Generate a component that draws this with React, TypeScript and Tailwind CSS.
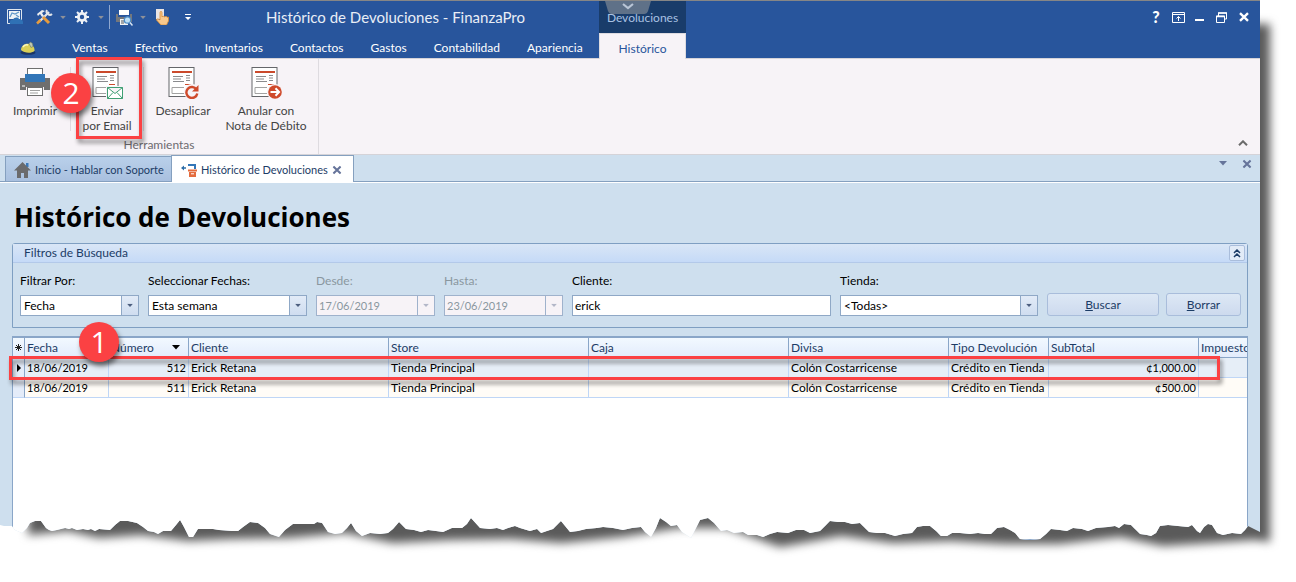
import type { ReactNode } from "react";

type Point = [number, number];

type ReturnRow = {
  date: string;
  number: number;
  client: string;
  store: string;
  currency: string;
  kind: string;
  subtotal: string;
};

const rows: ReturnRow[] = [
  {
    date: "18/06/2019",
    number: 512,
    client: "Erick Retana",
    store: "Tienda Principal",
    currency: "Colón Costarricense",
    kind: "Crédito en Tienda",
    subtotal: "¢1,000.00",
  },
  {
    date: "18/06/2019",
    number: 511,
    client: "Erick Retana",
    store: "Tienda Principal",
    currency: "Colón Costarricense",
    kind: "Crédito en Tienda",
    subtotal: "¢500.00",
  },
];

const menu = [
  "Ventas",
  "Efectivo",
  "Inventarios",
  "Contactos",
  "Gastos",
  "Contabilidad",
  "Apariencia",
];

// Torn paper profile: x over a 1260 wide sheet, y as distance from its bottom.
const tear: Point[] = [
  [0, 15], [4, 14], [12, 14], [15, 10], [22, 7], [27, 12], [30, 17], [35, 19],
  [41, 19], [46, 12], [49, 10], [52, 9], [57, 10], [61, 11], [65, 12], [69, 11],
  [72, 12], [77, 10], [83, 11], [88, 10], [91, 11], [95, 9], [99, 11], [110, 10],
  [115, 15], [120, 19], [128, 19], [137, 17], [143, 13], [148, 9], [154, 8],
  [158, 6], [163, 9], [171, 9], [176, 15], [180, 20], [184, 13], [189, 3],
  [193, 3], [198, 11], [206, 11], [213, 11], [219, 10], [232, 9], [238, 9],
  [243, 13], [250, 18], [258, 17], [265, 12], [270, 6], [279, 3], [285, 10],
  [293, 16], [302, 16], [314, 16], [317, 18], [322, 17], [328, 8], [335, 6],
  [342, 7], [347, 12], [351, 17], [356, 9], [362, 4], [370, 7], [380, 6],
  [388, 7], [393, 11], [399, 18], [406, 11], [414, 10], [421, 8], [428, 10],
  [436, 9], [443, 8], [452, 12], [462, 12], [467, 16], [471, 22], [480, 12],
  [490, 11], [497, 12], [503, 10], [508, 12], [515, 14], [520, 12], [530, 9],
  [537, 11], [541, 7], [547, 9], [553, 11], [561, 19], [570, 8], [578, 9],
  [586, 11], [597, 12], [603, 13], [613, 12], [623, 10], [632, 12], [641, 13],
  [645, 8], [651, 3], [656, 12], [660, 22], [666, 18], [671, 14], [677, 15],
  [682, 8], [691, 2], [695, 10], [700, 20], [708, 22], [714, 17], [721, 9],
  [727, 10], [734, 7], [743, 8], [748, 5], [757, 5], [763, 3], [770, 6],
  [777, 8], [788, 7], [796, 10], [804, 10], [810, 7], [820, 9], [825, 14],
  [830, 19], [838, 18], [845, 18], [852, 16], [860, 17], [865, 12], [869, 8],
  [877, 7], [885, 7], [895, 4], [903, 6], [912, 7], [917, 13], [923, 14],
  [930, 14], [936, 9], [941, 4], [947, 4], [952, 7], [960, 7], [970, 6],
  [978, 7], [985, 6], [991, 6], [997, 12], [1004, 13], [1010, 10], [1015, 7],
  [1020, 1], [1030, 0], [1040, 1], [1046, 6], [1051, 11], [1060, 10], [1067, 9],
  [1073, 12], [1082, 11], [1088, 9], [1096, 12], [1108, 13], [1115, 14],
  [1119, 12], [1124, 16], [1131, 15], [1136, 10], [1140, 6], [1147, 5],
  [1151, 4], [1156, 7], [1160, 14], [1168, 15], [1178, 14], [1188, 13],
  [1192, 15], [1197, 9], [1200, 7], [1204, 13], [1208, 16], [1212, 15],
  [1217, 7], [1223, 5], [1232, 7], [1241, 6], [1245, 10], [1248, 14], [1260, 8],
];

function tornEdge(points: Point[]) {
  const edge = [...points]
    .reverse()
    .map(([x, y]) => `${((x / 1260) * 100).toFixed(2)}% calc(100% - ${y}px)`);

  return `polygon(0 0, 100% 0, ${edge.join(", ")})`;
}

const sheetClip = tornEdge(tear);
const shadowClip = tornEdge(tear.filter((_, index) => index % 8 === 0 || index === tear.length - 1));

function CaretIcon({ className = "" }: { className?: string }) {
  return (
    <svg viewBox="0 0 8 5" className={`h-[5px] w-2 shrink-0 ${className}`} aria-hidden>
      <path d="M0 0h8L4 4.6z" fill="currentColor" />
    </svg>
  );
}

function CloseIcon({ className = "" }: { className?: string }) {
  return (
    <svg viewBox="0 0 10 10" className={`size-2.5 ${className}`} aria-hidden>
      <path d="M1 1.2l8 7.6M9 1.2L1 8.8" stroke="currentColor" strokeWidth="2.4" />
    </svg>
  );
}

function PrinterIcon() {
  return (
    <svg viewBox="0 0 32 32" className="size-8" aria-hidden>
      <path d="M1 11h5v4h20v-4h5v12h-6v-3H7v3H1z" fill="#6f6f6f" />
      <rect x="8.5" y="1.5" width="15" height="8" fill="#fff" stroke="#6f6f6f" />
      <rect x="6" y="7" width="20" height="8" fill="#3276b8" />
      <rect x="8.5" y="20.5" width="15" height="8" fill="#fff" stroke="#6f6f6f" />
      <path d="M11 23.5h10M11 26h8" stroke="#a0a0a0" />
      <path d="M3 19h3" stroke="#fff" />
    </svg>
  );
}

function DocumentIcon({ children }: { children: ReactNode }) {
  return (
    <svg viewBox="0 0 32 32" className="size-8" aria-hidden>
      <rect x="2" y=".5" width="25" height="29" fill="#fff" stroke="#65666a" />
      <path d="M5 5h20" stroke="#cb4a2c" strokeWidth="2" />
      <path d="M6 9.500h10M6 12h8M6 14.500h11M19 8.500h4M19 11h4M19 13.500h4" stroke="#8a8b8e" />
      <path d="M18 17.500h6" stroke="#cb4a2c" />
      <path d="M17 20.500H5v6h12" fill="none" stroke="#a2a2a2" />
      {children}
    </svg>
  );
}

function MailDocumentIcon() {
  return (
    <DocumentIcon>
      <rect x="15" y="19" width="17" height="13" fill="#f7f3f7" />
      <path
        d="M16.500 20.500h15v11h-15zM16.500 20.500l7.500 6 7.500-6M16.500 31.500l5.500-6M31.500 31.500L26 25.500"
        fill="#fff"
        stroke="#3f9f73"
      />
    </DocumentIcon>
  );
}

function UndoDocumentIcon() {
  return (
    <DocumentIcon>
      <circle cx="25" cy="25" r="8" fill="#f7f3f7" />
      <path d="M29.500 22.500a5.500 5.500 0 1 0 .8 4" fill="none" stroke="#cf4a2b" strokeWidth="2.400" />
      <path d="M31.500 18v6.500H25z" fill="#cf4a2b" />
    </DocumentIcon>
  );
}

function VoidDocumentIcon() {
  return (
    <DocumentIcon>
      <circle cx="25" cy="25" r="8" fill="#f7f3f7" />
      <circle cx="25" cy="25" r="6.800" fill="#cf4a2b" />
      <path d="M20.500 25h8M25.500 21.200l3.600 3.800-3.600 3.800" fill="none" stroke="#fff" strokeWidth="2" />
    </DocumentIcon>
  );
}

function QuickAccessBar() {
  return (
    <div className="flex items-center pl-[7px] text-[#8e9199]">
      <button type="button" aria-label="Aplicación">
        <svg viewBox="0 0 16 16" className="size-4" aria-hidden>
          <path d="M.5.5h14v14H.5z" fill="#28559c" stroke="#dfe7ef" />
          <path d="M2 2h11v8H2z" fill="#eef3f7" />
          <path d="M3 8l2-4 3 1 4-2M9 6l3 2" fill="none" stroke="#5f97c9" strokeWidth="1.200" />
          <path d="M3 15c-1-3 1-5 3-4 1-3 5-3 6-1 2-.5 4 1 4 3v2z" fill="#2f71b5" />
        </svg>
      </button>
      <button type="button" aria-label="Herramientas" className="ml-3 flex items-center gap-1.5">
        <svg viewBox="0 0 18 16" className="h-4 w-[18px]" aria-hidden>
          <path d="M4 13L14 3" stroke="#e2e5e8" strokeWidth="2.200" />
          <path d="M12 1a3 3 0 0 0 1 4 3 3 0 0 0 4 0" fill="none" stroke="#e2e5e8" strokeWidth="2" />
          <path d="M8 8l6 6" stroke="#e79b3c" strokeWidth="3" />
          <path d="M2 5l5-4 3 1-3 2 2 3-2 1-2-3-2 2z" fill="#eceef0" />
          <path d="M2 14.500l3.500-3.500" stroke="#e79b3c" strokeWidth="2.500" />
        </svg>
        <CaretIcon className="scale-75" />
      </button>
      <button type="button" aria-label="Opciones" className="ml-2 flex items-center gap-2">
        <svg viewBox="0 0 14 14" className="size-3.5" aria-hidden>
          <circle cx="7" cy="7" r="3.600" fill="none" stroke="#eef1f6" strokeWidth="2.800" />
          <path
            d="M7 0v3M7 11v3M0 7h3M11 7h3M2 2l2.200 2.200M9.800 9.800L12 12M12 2L9.800 4.200M4.200 9.800L2 12"
            stroke="#eef1f6"
            strokeWidth="2"
          />
        </svg>
        <CaretIcon className="scale-75" />
      </button>
      <span className="ml-1 h-6 w-px bg-[#8fa7cf]" />
      <button type="button" aria-label="Vista previa" className="ml-1.5 flex items-center gap-1.5">
        <svg viewBox="0 0 17 17" className="size-[17px]" aria-hidden>
          <path d="M0 5h2v3h12V5h2v8H0z" fill="#74777c" />
          <rect x="3" y="1" width="10" height="5" fill="#fff" />
          <rect x="4" y="10" width="8" height="6" fill="#f4f4f4" />
          <path d="M5 12h3M5 14h3" stroke="#55585d" />
          <circle cx="11.500" cy="11" r="3.200" fill="#bfe0f6" stroke="#4d8cc6" strokeWidth="1.300" />
          <path d="M14 13.500l2.500 3" stroke="#d8e5f2" strokeWidth="1.500" />
        </svg>
        <CaretIcon className="scale-75" />
      </button>
      <button type="button" aria-label="Modo táctil" className="ml-2">
        <svg viewBox="0 0 14 16" className="h-4 w-3.5" aria-hidden>
          <rect x="1" y="0" width="8" height="10" fill="#e9e4e4" />
          <path
            d="M5 10V3.500c0-1.500 2-1.500 2 0V8l1-1 1.500.8 1.500-.5 1.500 1 1-.3V12l-2 4H6L1.500 11c0-1.500 1.500-1.500 3.500 0z"
            fill="#f8c88c"
            stroke="#d98d36"
            strokeWidth=".8"
          />
        </svg>
      </button>
      <button type="button" aria-label="Personalizar barra" className="ml-4 text-white">
        <svg viewBox="0 0 6 7" className="h-[7px] w-1.5" aria-hidden>
          <path d="M0 0h6v1H0zM0 3h6L3 6z" fill="currentColor" />
        </svg>
      </button>
    </div>
  );
}

function WindowButtons() {
  return (
    <div className="flex items-center gap-2.5 pr-[11px] text-white">
      <button type="button" className="w-3 text-base leading-4 font-black">?</button>
      <button type="button" aria-label="Ocultar cinta">
        <svg viewBox="0 0 13 11" className="h-[11px] w-[13px]" aria-hidden>
          <path d="M.5.5h12v10H.5zM0 2.500h13M6.500 9V4.500M4.500 6.500l2-2 2 2" fill="none" stroke="currentColor" />
        </svg>
      </button>
      <button type="button" aria-label="Minimizar" className="pt-1.5">
        <span className="block h-0.5 w-[9px] bg-white" />
      </button>
      <button type="button" aria-label="Restaurar" className="pl-0.5">
        <svg viewBox="0 0 11 11" className="size-[11px]" aria-hidden>
          <path d="M2.500 4V1h8v6H8M.5 4h8v6.500h-8z" fill="none" stroke="currentColor" />
          <path d="M2 1h9M0 4.500h9" stroke="currentColor" strokeWidth="1.500" />
        </svg>
      </button>
      <button type="button" aria-label="Cerrar" className="pl-0.5">
        <CloseIcon />
      </button>
    </div>
  );
}

function Header() {
  return (
    <header className="grid grid-cols-[599px_87px_minmax(0,1fr)] border-t border-[#868686] bg-[#28559c] text-[#e9eef6]">
      <div className="flex flex-col">
        <div className="flex h-8 items-center justify-between pr-[74px]">
          <QuickAccessBar />
          <span className="text-[15px]">Histórico de Devoluciones - FinanzaPro</span>
        </div>
        <nav className="flex h-[26px] items-center border-b border-[#d5d3d8] pt-1 pl-5 text-xs text-white">
          <button type="button" aria-label="Menú principal" className="w-[52px]">
            <svg viewBox="0 0 16 14" className="h-3.5 w-4" aria-hidden>
              <ellipse cx="8" cy="11.500" rx="7.500" ry="2.300" fill="#1b3566" />
              <path d="M1 9c0-4 4-7 8-6 4 .5 6 4 5.500 7-3 2.500-10 2.500-13.500-1z" fill="#d9cf57" />
              <path d="M3 6c1-1.700 3-2.500 5-2" fill="none" stroke="#fbf7bd" strokeWidth="1.500" />
              <path d="M9 2.500l1.500-1.500 2 1.500.5 3-2 1z" fill="#bfc7b0" stroke="#6f7a61" strokeWidth=".6" />
            </svg>
          </button>
          <div className="flex gap-[27px]">
            {menu.map((item) => (
              <a key={item} href="#">{item}</a>
            ))}
          </div>
        </nav>
      </div>

      <div className="flex flex-col bg-[#193c6a] text-center text-xs">
        <div className="relative h-8 pt-[9px] text-[#a9c2e3]">
          Devoluciones
          <svg viewBox="0 0 46 13" className="absolute top-0 left-1.5 h-[13px] w-[46px]" aria-hidden>
            <path d="M0 0h46l-3 10q-1 3-4 3H6q-2 0-3-3z" fill="#67778c" fillOpacity=".9" />
            <path d="M18 3l5 4 5-4" fill="none" stroke="#b9c5d6" strokeWidth="2.200" />
          </svg>
        </div>
        <a
          href="#"
          className="flex h-[26px] items-center justify-center border border-b-0 border-[#dddbe0] bg-[#f7f3f7] pt-1 text-[#28559c]"
        >
          Histórico
        </a>
      </div>

      <div className="flex flex-col items-end justify-between">
        <div className="flex h-8 items-center">
          <WindowButtons />
        </div>
        <div className="w-full border-b border-[#d5d3d8]" />
      </div>
    </header>
  );
}

function Badge({ children, className }: { children: ReactNode; className: string }) {
  return (
    <span
      className={`absolute z-20 grid size-10 place-items-center rounded-full bg-[#fb4143] font-['Open_Sans',sans-serif] text-[30px] leading-none font-medium text-white shadow-[2px_4px_5px_rgba(0,0,0,0.5)] ${className}`}
    >
      {children}
    </span>
  );
}

function Ribbon() {
  return (
    <section className="flex h-24 items-stretch border-b border-[#d5d3d8] bg-[#f7f3f7] text-xs leading-[15px] text-[#444]">
      <div className="flex w-[319px] flex-col border-r border-[#dedbe0]">
        <div className="flex h-[78px] pt-2">
          <button type="button" className="flex w-[70px] flex-col items-center gap-1">
            <PrinterIcon />
            Imprimir
          </button>
          <span className="h-16 w-px bg-[#dedbe0]" />
          <div className="relative">
            <button type="button" className="flex w-[72px] flex-col items-center gap-1">
              <MailDocumentIcon />
              <span>
                Enviar
                <br />
                por Email
              </span>
            </button>
            <div className="absolute -top-2.5 left-[5px] h-[82px] w-[66px] border-[3px] border-[#fb4143] drop-shadow-[2px_4px_2px_rgba(0,0,0,0.45)]" />
            <Badge className="top-1.5 -left-5">2</Badge>
          </div>
          <span className="h-16 w-px bg-[#dedbe0]" />
          <button type="button" className="flex w-[78px] flex-col items-center gap-1">
            <UndoDocumentIcon />
            Desaplicar
          </button>
          <button type="button" className="flex w-[88px] flex-col items-center gap-1">
            <VoidDocumentIcon />
            <span>
              Anular con
              <br />
              Nota de Débito
            </span>
          </button>
        </div>
        <span className="text-center text-[#6d6a6f]">Herramientas</span>
      </div>
      <button type="button" aria-label="Contraer cinta" className="mr-3 mb-2 ml-auto self-end text-[#6b6b6b]">
        <svg viewBox="0 0 10 6" className="h-1.5 w-2.5" aria-hidden>
          <path d="M1 5.300L5 1.300l4 4" fill="none" stroke="currentColor" strokeWidth="2" />
        </svg>
      </button>
    </section>
  );
}

function DocumentTabs() {
  return (
    <div className="flex h-7 items-end border-b border-white text-[11px] text-[#1c3c66]">
      <div className="h-px w-[5px] bg-[#85a0bf]" />
      <a
        href="#"
        className="flex h-[26px] w-[166px] items-center gap-1 border border-r-0 border-[#85a0bf] bg-linear-to-b from-[#b9d0ea] to-[#a9c0df] pt-0.5 pl-2"
      >
        <svg viewBox="0 0 17 16" className="h-4 w-[17px]" aria-hidden>
          <path d="M12 1h2.500v4H12z" fill="#3b78b8" />
          <path d="M8.500 0L0 8.500h3V16h4v-5h3v5h4V8.500h3z" fill="#6b6b6d" />
        </svg>
        Inicio - Hablar con Soporte
      </a>
      <div className="flex h-[27px] w-[183px] items-center border border-b-0 border-[#85a0bf] bg-white pt-0.5 pl-[9px]">
        <svg viewBox="0 0 16 14" className="mr-1 h-3.5 w-4" aria-hidden>
          <path d="M0 5l3-2.500V4.200h2v1.600H3v1.700z" fill="#2d6da8" />
          <path d="M7 1h8v5h-2V3H7z" fill="#3276b8" />
          <path d="M7 6.500h9v2H7zM8 9h7v5H8z" fill="#e46c3e" />
          <path d="M10 10.800h3" stroke="#fff" />
        </svg>
        Histórico de Devoluciones
        <button type="button" aria-label="Cerrar pestaña" className="ml-1 text-[#66749a]">
          <CloseIcon className="scale-90" />
        </button>
      </div>
      <div className="flex h-[27px] flex-1 items-start justify-end gap-[15px] border-b border-[#85a0bf] pt-1 pr-2 text-[#66749a]">
        <button type="button" aria-label="Lista de pestañas" className="pt-0.5">
          <CaretIcon />
        </button>
        <button type="button" aria-label="Cerrar">
          <CloseIcon className="scale-90" />
        </button>
      </div>
    </div>
  );
}

function SelectField({ id, label, value, className }: { id: string; label: string; value: string; className: string }) {
  return (
    <div className={`flex flex-col gap-1.5 ${className}`}>
      <label htmlFor={id}>{label}</label>
      <div className="relative flex h-[21px] border border-[#8fa8c6] bg-white">
        <select id={id} className="w-full appearance-none bg-transparent pl-[3px] outline-none">
          <option>{value}</option>
        </select>
        <span className="pointer-events-none absolute inset-y-0 right-0 grid w-[17px] place-items-center border-l border-[#8fa8c6] bg-linear-to-b from-[#e2ebf7] to-[#cfddf0] text-[#4d5f80]">
          <CaretIcon className="scale-75" />
        </span>
      </div>
    </div>
  );
}

function DateField({ id, label, value }: { id: string; label: string; value: string }) {
  return (
    <div className="flex w-[119px] flex-col gap-1.5 text-[#8a979f]">
      <label htmlFor={id}>{label}</label>
      <div className="flex h-[21px] border border-[#9fb2cc] bg-[#f7f3f7]">
        <input id={id} value={value} disabled readOnly className="min-w-0 flex-1 pl-0.5 text-[11px] outline-none" />
        <button
          type="button"
          disabled
          aria-label={`Calendario ${label}`}
          className="grid w-[17px] place-items-center border-l border-[#9fb2cc] text-[#b3b7c8]"
        >
          <CaretIcon className="scale-75" />
        </button>
      </div>
    </div>
  );
}

function ActionButton({ letter, rest, className }: { letter: string; rest: string; className: string }) {
  return (
    <button
      type="button"
      className={`h-[23px] rounded-[3px] border border-[#a9bddb] bg-linear-to-b from-[#dde8f5] to-[#cddaee] text-[#1c3c66] ${className}`}
    >
      <u>{letter}</u>
      {rest}
    </button>
  );
}

function Filters() {
  return (
    <section className="rounded-t-[3px] border border-[#7f9fc2] text-xs leading-4 text-black">
      <div className="flex h-[19px] items-center justify-between border-b border-[#b3c9e9] bg-linear-to-b from-[#d9e6f6] to-[#c5daf7] pr-0.5 pl-[11px] text-[#1c3c66]">
        <h2>Filtros de Búsqueda</h2>
        <button
          type="button"
          aria-label="Contraer filtros"
          className="grid size-4 place-items-center rounded-[2px] border border-[#a9bddb] bg-[#e2ebf7]"
        >
          <svg viewBox="0 0 8 9" className="h-[9px] w-2" aria-hidden>
            <path d="M1 4l3-3 3 3M1 8l3-3 3 3" fill="none" stroke="currentColor" strokeWidth="1.500" />
          </svg>
        </button>
      </div>
      <div className="flex items-end gap-[9px] pt-2.5 pr-1.5 pb-[11px] pl-[7px]">
        <SelectField id="filter-by" label="Filtrar Por:" value="Fecha" className="w-[119px]" />
        <SelectField id="dates" label="Seleccionar Fechas:" value="Esta semana" className="w-[159px]" />
        <DateField id="from" label="Desde:" value="17/06/2019" />
        <DateField id="to" label="Hasta:" value="23/06/2019" />
        <div className="flex min-w-0 flex-1 flex-col gap-1.5">
          <label htmlFor="client">Cliente:</label>
          <input id="client" defaultValue="erick" className="h-[21px] border border-[#8fa8c6] bg-white pl-0.5 outline-none" />
        </div>
        <SelectField id="store" label="Tienda:" value="<Todas>" className="w-[198px]" />
        <div className="flex gap-[7px]">
          <ActionButton letter="B" rest="uscar" className="w-28" />
          <ActionButton letter="B" rest="orrar" className="w-[75px]" />
        </div>
      </div>
    </section>
  );
}

const headCell = "h-5 border-r border-b border-[#8aa6c8] px-0.5 text-left font-normal whitespace-nowrap";
const cell = "h-5 border-r border-b border-[#bfd6f6] px-0.5 whitespace-nowrap";

function ReturnsGrid() {
  return (
    <section className="relative mt-2 flex flex-1 flex-col">
      <div className="flex-1 overflow-hidden border border-t-2 border-[#8aa6c8] bg-white">
        <table className="w-[1267px] table-fixed border-separate border-spacing-0 text-xs leading-4 text-black">
          <colgroup>
            <col className="w-3" />
            <col className="w-[84px]" />
            <col className="w-20" />
            <col className="w-[200px]" />
            <col className="w-[200px]" />
            <col className="w-[200px]" />
            <col className="w-40" />
            <col className="w-[100px]" />
            <col className="w-[150px]" />
            <col />
          </colgroup>
          <thead className="bg-linear-to-b from-[#f2f9ff] to-[#e2ebfb] text-[#1c3c66]">
            <tr>
              <th className={headCell}>
                <svg viewBox="0 0 7 7" className="size-[7px]" aria-label="Filtro">
                  <path d="M3.500 0v7M0 3.500h7M1 1l5 5M6 1L1 6" stroke="#222" />
                </svg>
              </th>
              <th className={headCell}>Fecha</th>
              <th className={headCell}>
                <span className="flex items-center justify-between pr-1.5">
                  Número
                  <CaretIcon className="text-black" />
                </span>
              </th>
              <th className={headCell}>Cliente</th>
              <th className={headCell}>Store</th>
              <th className={headCell}>Caja</th>
              <th className={headCell}>Divisa</th>
              <th className={headCell}>Tipo Devolución</th>
              <th className={headCell}>SubTotal</th>
              <th className={headCell}>Impuesto</th>
            </tr>
          </thead>
          <tbody>
            {rows.map((row, index) => (
              <tr key={row.number} className={index === 0 ? "bg-[#e6eef7]" : "bg-[#fffcf7]"}>
                <td className="border-r border-b border-r-[#8aa6c8] border-b-[#bfd6f6] bg-[#e4ecf9]">
                  {index === 0 ? (
                    <svg viewBox="0 0 4 8" className="mx-auto h-2 w-1" aria-hidden>
                      <path d="M0 0l4 4-4 4z" />
                    </svg>
                  ) : null}
                </td>
                <td className={`${cell} text-[11px]`}>{row.date}</td>
                <td className={`${cell} text-right text-[11px]`}>{row.number}</td>
                <td className={cell}>{row.client}</td>
                <td className={cell}>{row.store}</td>
                <td className={cell} />
                <td className={cell}>{row.currency}</td>
                <td className={cell}>{row.kind}</td>
                <td className={`${cell} text-right text-[11px]`}>{row.subtotal}</td>
                <td className={cell} />
              </tr>
            ))}
          </tbody>
        </table>
      </div>
      <div className="absolute top-5 right-[28px] -left-[3px] h-6 border-[3px] border-[#fb4143] drop-shadow-[2px_4px_2px_rgba(0,0,0,0.45)]" />
      <Badge className="-top-3.5 left-[67px]">1</Badge>
    </section>
  );
}

export default function App() {
  return (
    <div className="flex min-h-screen flex-col bg-white pr-9 pb-[42px] font-['Lato',sans-serif]">
      <div className="relative flex flex-1 flex-col">
        <div className="absolute top-6 -right-2.5 -bottom-2.5 left-7 blur-[5px]" aria-hidden>
          <div className="size-full bg-[#5a5a5a]" style={{ clipPath: shadowClip }} />
        </div>
        <main className="relative flex flex-1 flex-col bg-[#cedfee]" style={{ clipPath: sheetClip }}>
          <Header />
          <Ribbon />
          <DocumentTabs />
          <div className="flex flex-1 flex-col px-3">
            <h1 className="pt-4 pb-2 pl-0.5 font-['Open_Sans',sans-serif] text-[26px] leading-9 font-bold text-black">
              Histórico de Devoluciones
            </h1>
            <Filters />
            <ReturnsGrid />
          </div>
        </main>
      </div>
    </div>
  );
}
